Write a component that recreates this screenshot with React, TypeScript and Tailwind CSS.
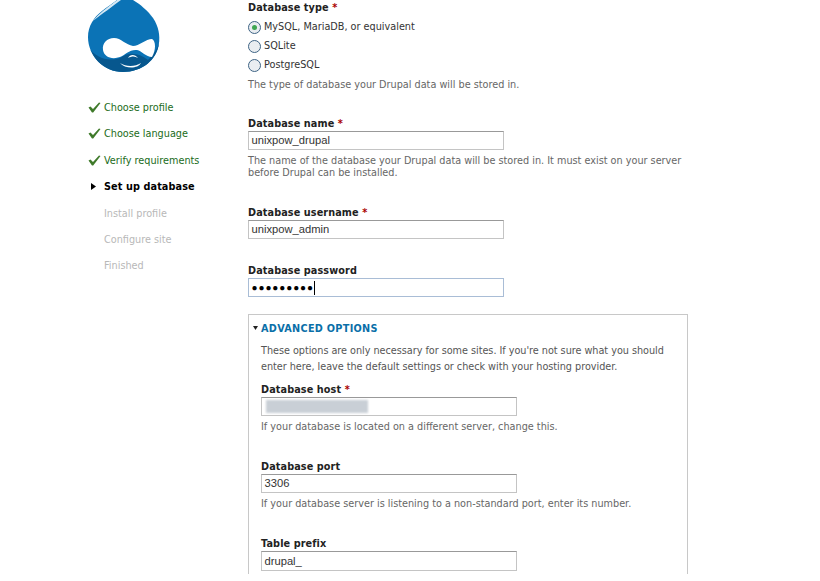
import type { ReactNode } from "react";

const font = { fontFamily: '"DejaVu Sans", Verdana, sans-serif' };

function Check() {
  return (
    <svg width="13" height="11" viewBox="0 0 13 11" className="absolute left-[-16px] top-[2px]">
      <path d="M0.5 5.5 L2.5 4.5 L5 7 L11 0.5 L12.5 1 L5.2 10.5 L4 10.5 Z" fill="#3f7a2a" />
    </svg>
  );
}

function Step({ text, state }: { text: string; state: "done" | "active" | "todo" }) {
  const cls =
    state === "done"
      ? "text-[#1a6b1a]"
      : state === "active"
        ? "text-black font-bold tracking-[0.1px]"
        : "text-[#b8b8b8]";
  return (
    <li className={`relative h-[26.4px] leading-[15px] ${cls}`}>
      {state === "done" && <Check />}
      {state === "active" && (
        <svg width="5" height="7" viewBox="0 0 5 7" className="absolute left-[-13px] top-[4px]">
          <path d="M0 0 L5 3.5 L0 7 Z" fill="#000" />
        </svg>
      )}
      {text}
    </li>
  );
}

function Req() {
  return <span className="text-[#a00] font-bold"> *</span>;
}

function Radio({ label, checked }: { label: string; checked?: boolean }) {
  return (
    <div className="flex items-center h-[19px] text-[#333]">
      <span className="w-[13px] h-[13px] rounded-full border border-[#3f6485] bg-[#e9edf1] flex items-center justify-center mr-[3px]">
        {checked && <span className="w-[5px] h-[5px] rounded-full bg-[#3fa652]" />}
      </span>
      {label}
    </div>
  );
}

function Field({
  label,
  req,
  value,
  children,
  focus,
  blur,
  tall,
}: {
  label: string;
  req?: boolean;
  value?: string;
  children?: ReactNode;
  focus?: boolean;
  blur?: boolean;
  tall?: boolean;
}) {
  return (
    <div>
      <div className="font-bold text-[#222] h-[16px] leading-[17px] tracking-[0.1px]">
        {label}
        {req && <Req />}
      </div>
      <div
        className={`w-[256px] ${tall ? "h-[20px]" : "h-[19px]"} border bg-white flex items-center pl-[2.5px] text-[11.2px] text-[#333] ${
          focus ? "border-[#a9bdd6]" : "border-[#c4c4c4] border-t-[#999]"
        }`}
        style={{ fontFamily: '"Liberation Sans", Arial, sans-serif' }}
      >
        {value}
        {blur && <span className="block ml-[1px] w-[102px] h-[13px] bg-[#c9cfd6] blur-[1px]" />}
        {focus && (
          <>
            <span className="tracking-[0.9px] text-[10px] text-black">●●●●●●●●●</span>
            <span className="w-px h-[14px] bg-black" />
          </>
        )}
      </div>
      {children && <div className="mt-[5px] leading-[12px] text-[#666]">{children}</div>}
    </div>
  );
}

export default function App() {
  return (
    <div className="w-[820px] h-[581px] overflow-hidden bg-white" style={font}>
      <div className="h-[574px] overflow-hidden flex text-[9.7px]">
        <aside className="w-[248px] shrink-0 pl-[88px]">
          <svg width="72" height="72" viewBox="0 0 72 72" className="block">
            <defs>
              <clipPath id="drop">
                <path d="M29 0 L45 0 C52 4 60 11 65 18 C71 27 72 36 71 43 C69 60 54 72 35 72 C16 72 0 56 0 37 C0 26 6 17 14 11 C19 7 25 3 29 0 Z" />
              </clipPath>
            </defs>
            <path d="M29 0 L45 0 C52 4 60 11 65 18 C71 27 72 36 71 43 C69 60 54 72 35 72 C16 72 0 56 0 37 C0 26 6 17 14 11 C19 7 25 3 29 0 Z" fill="#0b73b6" />
            <g clipPath="url(#drop)">
              <path d="M0 47 C8 58 20 62 32 58 C40 52 50 52 60 60 C66 54 70 48 72 40 L72 74 L0 74 Z" fill="#07578e" />
              <path d="M5 21 C10 14 20 7 29 0 L33 0 C25 6 14 14 5 21 Z" fill="#d6e8f4" />
              <path d="M50 0 C57 6 63 12 66 19 C60 12 55 7 50 0 Z" fill="#3a93cc" />
            </g>
            <path d="M15 50 C14 43 19 38 26 38 C33 38 38 45 45 46 C51 46 58 39 64 39 C68 41 68 50 64 57 C58 57 54 51 49 50 C42 49 37 55 32 57 C24 60 16 57 15 50 Z" fill="#fff" />
            <path d="M32 63 C38 67 47 67 53 63 C50 69 37 69 32 63 Z" fill="#fff" />
            <path d="M40 58 C42 54 47 54 50 58 C47 56 44 56 40 58 Z" fill="#fff" />
          </svg>
          <ul className="mt-[28px] ml-[16px] w-[120px]">
            <Step text="Choose profile" state="done" />
            <Step text="Choose language" state="done" />
            <Step text="Verify requirements" state="done" />
            <Step text="Set up database" state="active" />
            <Step text="Install profile" state="todo" />
            <Step text="Configure site" state="todo" />
            <Step text="Finished" state="todo" />
          </ul>
        </aside>
        <main className="w-[440px] shrink-0 text-[#444]">
          <div className="font-bold text-[#222] h-[16px] leading-[15px] tracking-[0.1px]">
            Database type
            <Req />
          </div>
          <div className="mt-[2px]">
            <Radio label="MySQL, MariaDB, or equivalent" checked />
            <Radio label="SQLite" />
            <Radio label="PostgreSQL" />
          </div>
          <div className="mt-[4px] leading-[12px] text-[#666]">The type of database your Drupal data will be stored in.</div>
          <div className="mt-[24px]">
            <Field label="Database name" req value="unixpow_drupal">
              The name of the database your Drupal data will be stored in. It must exist on your server
              <br />
              before Drupal can be installed.
            </Field>
          </div>
          <div className="mt-[25px]">
            <Field label="Database username" req value="unixpow_admin" />
          </div>
          <div className="mt-[23px]">
            <Field label="Database password" focus />
          </div>
          <fieldset className="mt-[17px] border border-[#c8c8c8] w-[440px] pl-[12px] pt-[5px] h-[400px]">
            <div className="font-bold text-[#0a6fa8] h-[16px] leading-[17px] relative tracking-[0.3px]">
              <svg width="5" height="4" viewBox="0 0 5 4" className="absolute left-[-8px] top-[6px]">
                <path d="M0 0 L5 0 L2.5 4 Z" fill="#222" />
              </svg>
              ADVANCED OPTIONS
            </div>
            <div className="mt-[7px] leading-[16px] text-[#555] tracking-[-0.03px]">
              These options are only necessary for some sites. If you're not sure what you should
              <br />
              enter here, leave the default settings or check with your hosting provider.
            </div>
            <div className="mt-[6px]">
              <Field label="Database host" req blur>
                If your database is located on a different server, change this.
              </Field>
            </div>
            <div className="mt-[25px]">
              <Field label="Database port" value="3306">
                If your database server is listening to a non-standard port, enter its number.
              </Field>
            </div>
            <div className="mt-[25px]">
              <Field label="Table prefix" value="drupal_" tall />
            </div>
          </fieldset>
        </main>
      </div>
    </div>
  );
}
